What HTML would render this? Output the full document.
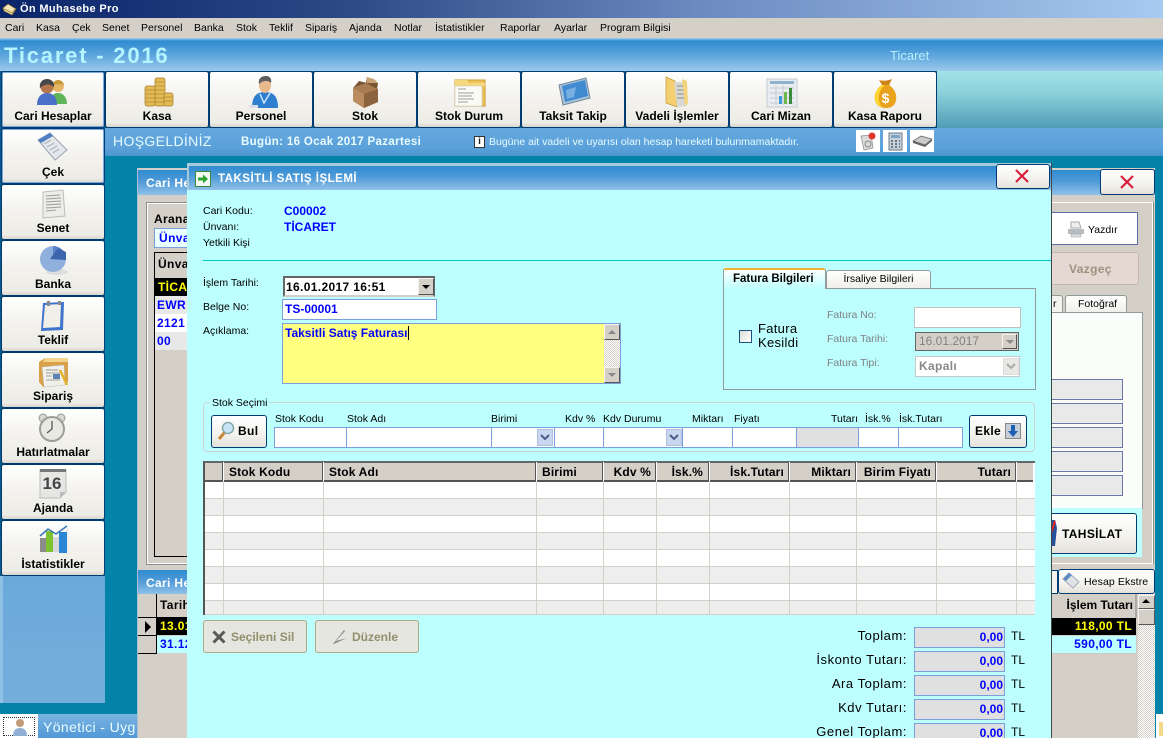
<!DOCTYPE html>
<html lang="tr"><head><meta charset="utf-8"><title>Ön Muhasebe Pro</title>
<style>
html,body{margin:0;padding:0;width:1163px;height:738px;overflow:hidden}
body{background:#0483a9;font:10.5px/14px "Liberation Sans","DejaVu Sans",sans-serif;color:#000}
div,span,svg{position:absolute;box-sizing:border-box}
#root{left:0;top:0;width:1163px;height:738px;overflow:hidden;background:#0483a9}
.t{white-space:nowrap}
.bd{font-weight:bold;letter-spacing:.35px}
.z{letter-spacing:0}
.r{text-align:right}
.m{top:21px;font-size:10.5px}
.tb{background:linear-gradient(#fff,#f5f4f0 40%,#ecebe5 92%,#d9d5c9);border:1px solid #003c74;border-radius:3px;width:104px;height:57px}
.tb b{position:absolute;left:0;right:0;text-align:center;top:37px;font-size:12px;line-height:14px;letter-spacing:0;white-space:nowrap}
.tb svg{left:34px;top:4px}
.ttl{background:linear-gradient(#2f8bd0,#4f9ad8 45%,#8fc1e8)}
.lb{font-size:10.5px;white-space:nowrap}
.in{background:#fff;border:1px solid #7b9fdb}
.btn{background:linear-gradient(#fff,#f3f2ee 60%,#e4e1d8);border:1px solid #003c74;border-radius:3px}
.dis{background:#e6e6e0;border:1px solid #aca987;border-radius:3px;color:#8f8f6c;font-weight:bold;font-size:12px}
.cv{width:1px;top:482px;height:133px;background:#d4d0c8}
.hs{width:2px;top:462px;height:20px;background:#555;border-right:1px solid #fff}
.hd{top:465px;font-size:12px;font-weight:bold;letter-spacing:.15px;white-space:nowrap}
.tot{left:914px;width:91px;height:21px;background:#e0e0e0;border:1px solid #7b9fdb;color:#00f;font-weight:bold;font-size:12px;text-align:right;padding-right:1px;line-height:19px}
.tl{left:760px;width:147px;text-align:right;font-size:13px;letter-spacing:.55px;white-space:nowrap}
.tu{left:1011px;font-size:12px}
.chk{background:repeating-conic-gradient(#fff 0 25%,#d4d0c8 0 50%) 0 0/2px 2px}
.sb{background:#d4d0c8;border:1px solid;border-color:#f4f3ee #555 #555 #f4f3ee}
.fld{left:1051px;width:72px;height:21px;background:#e9e9e9;border:1px solid #6a7aa8;border-left:0}
</style></head><body>
<div id="root">

<!-- title bar -->
<div style="left:0;top:0;width:1163px;height:18px;background:linear-gradient(90deg,#0a246a,#2c4a86 30%,#6b8ac0 60%,#a6caf0)"></div>
<svg style="left:2px;top:3px" width="15" height="13" viewBox="0 0 15 13"><path d="M1 5L6 1l8 5-4 6-8-4z" fill="#f1e3b5" stroke="#8a6a2a" stroke-width=".6"/><path d="M2 6l8 4 3-4" fill="none" stroke="#b08d45"/></svg>
<div class="t bd" style="left:20px;top:2px;color:#fff;font-size:11px">Ön Muhasebe Pro</div>

<!-- menu -->
<div style="left:0;top:18px;width:1163px;height:20px;background:#d4d0c8"></div>
<span class="t m" style="left:5px">Cari</span><span class="t m" style="left:36px">Kasa</span><span class="t m" style="left:72px">Çek</span><span class="t m" style="left:102px">Senet</span><span class="t m" style="left:141px">Personel</span><span class="t m" style="left:194px">Banka</span><span class="t m" style="left:236px">Stok</span><span class="t m" style="left:269px">Teklif</span><span class="t m" style="left:305px">Sipariş</span><span class="t m" style="left:349px">Ajanda</span><span class="t m" style="left:394px">Notlar</span><span class="t m" style="left:435px">İstatistikler</span><span class="t m" style="left:500px">Raporlar</span><span class="t m" style="left:554px">Ayarlar</span><span class="t m" style="left:600px">Program Bilgisi</span>

<!-- app header -->
<div style="left:0;top:38px;width:1163px;height:33px;background:linear-gradient(#a6d0ee 0,#2f8bd0 3px,#5ba3dc 50%,#9ccaec)"></div>
<div class="t" style="left:4px;top:43px;font-size:22px;line-height:26px;font-weight:bold;color:#b5f5ff;letter-spacing:1.800px">Ticaret - 2016</div>
<div class="t" style="left:890px;top:49px;font-size:13px;color:#b5f0ff">Ticaret</div>

<!-- toolbar bg -->
<div style="left:937px;top:71px;width:226px;height:57px;background:linear-gradient(#a2e2e8,#8ad0da 40%,#4f9db5)"></div>
<div style="left:0;top:71px;width:937px;height:57px;background:#0b5a8c"></div>

<div class="tb" style="left:1px;top:71px;box-shadow:inset 0 0 0 1px #7fa8e0"><svg width="34" height="32" viewBox="0 0 34 32"><circle cx="22" cy="10" r="6" fill="#e8b765"/><path d="M22 4a6 6 0 0 1 6 5c-3-1-8-1-11 0a6 6 0 0 1 5-5z" fill="#c79a3a"/><path d="M14 28c0-7 3-11 8-11s9 4 9 11z" fill="#5fb45a"/><circle cx="11" cy="11" r="6.500" fill="#b5764a"/><path d="M4 12c-1-6 3-9 7-9s8 3 7 8c-3-3-9-4-14 1z" fill="#47474a"/><path d="M1 29c0-8 4-12 10-12s10 4 10 12z" fill="#4a70c8"/></svg><b>Cari Hesaplar</b></div>
<div class="tb" style="left:105px;top:71px"><svg width="34" height="32" viewBox="0 0 34 32"><g fill="#e2ba58" stroke="#a87f25" stroke-width=".7"><rect x="15" y="2" width="10" height="28" rx="2"/><rect x="5" y="10" width="10" height="20" rx="2"/><rect x="24" y="17" width="9" height="13" rx="2"/></g><path d="M15 6h10M15 10h10M15 14h10M15 18h10M15 22h10M15 26h10M5 14h10M5 18h10M5 22h10M5 26h10M24 21h9M24 25h9" stroke="#b08a2e" stroke-width=".8"/></svg><b>Kasa</b></div>
<div class="tb" style="left:209px;top:71px"><svg width="36" height="33" viewBox="0 0 36 33"><path d="M8 32c0-11 4-16 13-16s13 5 13 16z" fill="#2f7fd0"/><ellipse cx="21" cy="9" rx="6" ry="8" fill="#e8b98c"/><path d="M15 8c-1-6 3-8 7-8s6 3 5 7c-3-3-8-3-12 1z" fill="#5e5e62"/><path d="M16 18l4 9 6-10" fill="none" stroke="#d5ecff" stroke-width="1.400"/><rect x="5" y="29" width="9" height="3" fill="#dde"/></svg><b>Personel</b></div>
<div class="tb" style="left:313px;top:71px"><svg width="36" height="33" viewBox="0 0 36 33"><path d="M5 12l14-5 11 6v13l-14 6-11-7z" fill="#a97b50"/><path d="M16 18l14-5v13l-14 6z" fill="#8c6440"/><path d="M5 12l11 6v14l-11-7z" fill="#bb8c60"/><path d="M19 1l11 6-1 6-11-6zM5 12l6-7 8 2" fill="#7a5534"/><path d="M19 1l7 2 4 4-11 0z" fill="#c9a277"/></svg><b>Stok</b></div>
<div class="tb" style="left:417px;top:71px"><svg width="36" height="32" viewBox="0 0 36 32"><path d="M3 4h30v26H3z" fill="#eec45a" stroke="#c89b2e"/><path d="M3 4h12l2 3h16v3H3z" fill="#f6d97c"/><rect x="3" y="10" width="27" height="20" fill="#fbfbf6" stroke="#c9c9bb" stroke-width=".6"/><path d="M6 13h8M6 17h16M6 20h14M6 23h16M6 26h10" stroke="#9b9b9b"/></svg><b>Stok Durum</b></div>
<div class="tb" style="left:521px;top:71px"><svg width="36" height="32" viewBox="0 0 36 32"><path d="M3 9L30 2l4 20-27 7z" fill="#a9c4da" stroke="#74889a"/><path d="M6 10l23-6 3 16-23 6z" fill="#3f8ad0"/><path d="M10 14l10-3-2 10-7 2z" fill="#79b0e2"/></svg><b>Taksit Takip</b></div>
<div class="tb" style="left:625px;top:71px"><svg width="36" height="33" viewBox="0 0 36 33"><path d="M6 1l9 4 2 26-11-4z" fill="#f3cf72" stroke="#c69a30" stroke-width=".7"/><path d="M14 6h11l2 24-10 1z" fill="#d9d9d4"/><path d="M17 10h7M17 14h8M17 18h8M17 22h8" stroke="#8b8b8b"/><path d="M22 3l5 2 1 22-3 3z" fill="#f3d47d"/></svg><b>Vadeli İşlemler</b></div>
<div class="tb" style="left:729px;top:71px"><svg width="36" height="32" viewBox="0 0 36 32"><rect x="3" y="3" width="30" height="28" fill="#e9edf0" stroke="#c5ccd3"/><rect x="6" y="5" width="24" height="3" fill="#8fb0cf"/><path d="M6 12h24M6 17h24M6 22h24M6 27h24M12 9v20M19 9v20" stroke="#c4ccd4"/><rect x="15" y="20" width="3" height="8" fill="#3d9ad6"/><rect x="20" y="16" width="3" height="12" fill="#6dba4a"/><rect x="25" y="12" width="3" height="16" fill="#3e8a3c"/></svg><b>Cari Mizan</b></div>
<div class="tb" style="left:833px;top:71px"><svg width="36" height="34" viewBox="0 0 36 34"><path d="M11 4c3 1 8 1 13-1l-3 6h-7z" fill="#cf8418"/><path d="M14 9h7c6 4 8 10 7 15-1 6-5 8-10 8s-10-2-11-8c-1-5 1-11 7-15z" fill="#eaa21d"/><path d="M14 9h3C10 14 9 25 14 31c-4-1-6-3-7-7-1-5 1-11 7-15z" fill="#ffd42e"/><text x="17.500" y="27" font-size="14" font-weight="bold" fill="#fff" text-anchor="middle" font-family="Liberation Sans">$</text></svg><b>Kasa Raporu</b></div>

<!-- welcome band -->
<div style="left:105px;top:128px;width:1058px;height:28px;background:linear-gradient(#66a8de,#5ba1da 70%,#4b95d0)"></div>
<div class="t" style="left:113px;top:134px;color:#e8fbff;font-size:14px;letter-spacing:.35px">HOŞGELDİNİZ</div>
<div class="t bd" style="left:241px;top:135px;color:#eafcff;font-size:11.500px">Bugün: 16 Ocak 2017 Pazartesi</div>
<div style="left:474px;top:136px;width:11px;height:12px;background:#fff;border:1px solid #333;color:#222;font:bold 10px/10px 'Liberation Sans';text-align:center">i</div>
<div class="t" style="left:489px;top:135px;color:#e8fbff;font-size:10.500px">Bugüne ait vadeli ve uyarısı olan hesap hareketi bulunmamaktadır.</div>
<div style="left:856px;top:130px;width:24px;height:22px;background:#fff"></div>
<div style="left:883px;top:130px;width:24px;height:22px;background:#fff"></div>
<div style="left:910px;top:130px;width:24px;height:22px;background:#fff"></div>
<svg style="left:858px;top:131px" width="20" height="20" viewBox="0 0 20 20"><path d="M3 5l10-1 2 13-9 2z" fill="#dcdcdc" stroke="#888" stroke-width=".7"/><circle cx="14" cy="5" r="3.500" fill="#e2362c"/><circle cx="10" cy="13" r="3" fill="none" stroke="#888"/></svg>
<svg style="left:887px;top:132px" width="17" height="19" viewBox="0 0 17 19"><rect x="2" y="1" width="13" height="17" fill="#c8d2da" stroke="#69788a"/><rect x="4" y="3" width="9" height="3" fill="#7da4c4"/><path d="M4 9h2M8 9h2M12 9h1M4 12h2M8 12h2M12 12h1M4 15h2M8 15h2M12 15h1" stroke="#4a5866" stroke-width="1.500"/></svg>
<svg style="left:912px;top:134px" width="21" height="14" viewBox="0 0 21 14"><path d="M1 7l8-5 11 3-7 6z" fill="#c9c9c9" stroke="#555" stroke-width=".7"/><path d="M1 7l12 4v2L1 9zM13 11l7-6v2l-7 6z" fill="#666"/></svg>

<!-- sidebar -->
<div style="left:0;top:128px;width:105px;height:575px;background:linear-gradient(#4f97d4,#73aedd);border-left:3px solid #8fc0e6"></div>
<div style="left:0;top:128px;width:105px;height:448px;background:#0b5a8c"></div>
<div class="tb" style="left:1px;top:128px;height:56px;box-shadow:inset 0 0 0 1px #7fa8e0"><svg style="left:33px;top:2px" width="34" height="32" viewBox="0 0 34 32"><path d="M3 9L15 2l17 17-12 10z" fill="#e3e6ea" stroke="#9aa4ae"/><path d="M3 9L15 2l3 3L6 12z" fill="#4d7fc4"/><path d="M9 13l7-4M12 16l7-4M15 19l7-4M18 22l6-4" stroke="#9fa9b3"/></svg><b style="top:36px">Çek</b></div>
<div class="tb" style="left:1px;top:184px;height:56px"><svg style="left:36px;top:3px" width="30" height="32" viewBox="0 0 30 32"><path d="M5 4l20-2 2 26-22 2z" fill="#ececea" stroke="#bcbcb8"/><path d="M8 8l14-1M8 11l15-1M8 14l15-1M8 17l15-1M8 20l15-1M8 23l10-1" stroke="#9c9c98"/></svg><b style="top:36px">Senet</b></div>
<div class="tb" style="left:1px;top:240px;height:56px"><svg style="left:34px;top:3px" width="34" height="32" viewBox="0 0 34 32"><ellipse cx="21" cy="28" rx="11" ry="3" fill="#ddd"/><circle cx="17" cy="15" r="13" fill="#8fb0dc"/><path d="M17 15V2a13 13 0 0 1 13 13z" fill="#5b84c4"/><path d="M14 15L22 4l8 4v8z" fill="#3c65ac"/></svg><b style="top:36px">Banka</b></div>
<div class="tb" style="left:1px;top:296px;height:56px"><svg style="left:35px;top:4px" width="30" height="31" viewBox="0 0 30 31"><path d="M6 2l21-1-1 28-22 1z" fill="#3f74cc"/><path d="M8 4l16-1-1 23-17 1z" fill="#f0efe9"/><rect x="10" y="0" width="3" height="5" fill="#888"/><rect x="21" y="0" width="3" height="4" fill="#888"/></svg><b style="top:36px">Teklif</b></div>
<div class="tb" style="left:1px;top:352px;height:56px"><svg style="left:35px;top:3px" width="34" height="33" viewBox="0 0 34 33"><path d="M2 6l6-4h23v24l-25 5-4-5z" fill="#d9a24a"/><path d="M8 2h23v4H6z" fill="#f4d58c"/><path d="M5 11l22-2 1 20-21 2z" fill="#f1f1ec" stroke="#bbb" stroke-width=".5"/><path d="M9 14h12M9 17h14M9 20h6M9 24h14" stroke="#9a9a9a"/><rect x="16" y="18" width="7" height="5" fill="#5b84b4"/><path d="M23 14l7 15" stroke="#e3b228" stroke-width="2.500"/></svg><b style="top:36px">Sipariş</b></div>
<div class="tb" style="left:1px;top:408px;height:56px"><svg style="left:35px;top:3px" width="30" height="32" viewBox="0 0 30 32"><circle cx="6" cy="6" r="4" fill="#d7d7d2" stroke="#999"/><circle cx="24" cy="6" r="4" fill="#d7d7d2" stroke="#999"/><circle cx="15" cy="17" r="12" fill="#e9e9e4" stroke="#9d9d98" stroke-width="2"/><path d="M15 9v8l-5 4" stroke="#555" stroke-width="1.300" fill="none"/></svg><b style="top:36px">Hatırlatmalar</b></div>
<div class="tb" style="left:1px;top:464px;height:56px"><svg style="left:36px;top:3px" width="30" height="32" viewBox="0 0 30 32"><path d="M2 2h26v22l-6 6H2z" fill="#e6e6e4" stroke="#bcbcba"/><path d="M2 1h26v3H2z" fill="#777"/><text x="14" y="21" font-size="17" font-weight="bold" fill="#444" text-anchor="middle" font-family="Liberation Sans">16</text><path d="M22 30l6-6h-6z" fill="#bbb"/></svg><b style="top:36px">Ajanda</b></div>
<div class="tb" style="left:1px;top:520px;height:56px"><svg style="left:35px;top:3px" width="34" height="32" viewBox="0 0 34 32"><path d="M2 28L32 3v27H6z" fill="#eee"/><rect x="3" y="14" width="6" height="14" fill="#8c8c8c"/><rect x="9" y="7" width="7" height="21" fill="#7cc230"/><rect x="16" y="13" width="6" height="15" fill="#d7d7d7"/><rect x="22" y="8" width="8" height="21" fill="#2a86d4"/><path d="M3 12l8-7 8 5 11-8" fill="none" stroke="#3475b8" stroke-width="1.500"/></svg><b style="top:36px">İstatistikler</b></div>

<!-- footer -->
<div style="left:0;top:714px;width:38px;height:24px;background:#fff"></div>
<div style="left:3px;top:717px;width:32px;height:19px;border:1px dotted #333"></div>
<svg style="left:12px;top:717px" width="16" height="19" viewBox="0 0 16 19"><circle cx="8" cy="6" r="4" fill="#c29a7a"/><path d="M1 19c0-6 3-8 7-8s7 2 7 8z" fill="#8fb0d4"/></svg>
<div style="left:38px;top:714px;width:100px;height:24px;background:linear-gradient(#7ab4e2,#5198d6)"></div>
<div class="t" style="left:43px;top:718px;font-size:14px;line-height:18px;color:#eafcff;letter-spacing:.4px">Yönetici - Uyg</div>
<div style="left:1156px;top:714px;width:7px;height:24px;background:#fff"></div>
<div style="left:1159px;top:722px;width:4px;height:14px;background:#f4d98a"></div>

<!-- background window -->
<div style="left:137px;top:168px;width:1018px;height:570px;background:#d4d0c8;border-left:1px solid #a7c0cf"></div>
<div class="ttl" style="left:138px;top:170px;width:1017px;height:25px"></div>
<div class="t bd" style="left:146px;top:176px;color:#fff;font-size:12px">Cari He</div>
<div style="left:147px;top:203px;width:60px;height:361px;border:1px solid #fff;outline:1px solid #8c8c88"></div>
<div class="t bd" style="left:154px;top:212px;font-size:12px">Arana</div>
<div style="left:154px;top:228px;width:40px;height:20px;background:#eaffff;border:1px solid #7b9fdb;color:#00f;font-weight:bold;font-size:12px;line-height:18px;padding-left:4px;letter-spacing:.4px">Ünva</div>
<div style="left:154px;top:252px;width:40px;height:305px;border:1px solid #000;border-right:0;background:#d4d0c8"></div>
<div class="t bd" style="left:158px;top:257px;font-size:12px">Ünva</div>
<div class="t bd" style="left:155px;top:278px;width:32px;height:18px;background:#000;color:#ff0;font-size:12px;line-height:18px;padding-left:3px">TİCA</div>
<div class="t bd" style="left:155px;top:296px;width:32px;height:18px;background:#e8e8e8;color:#00f;font-size:12px;line-height:18px;padding-left:2px">EWR</div>
<div class="t bd" style="left:155px;top:314px;width:32px;height:18px;background:#fff;color:#00f;font-size:12px;line-height:18px;padding-left:2px">2121</div>
<div class="t bd" style="left:155px;top:332px;width:32px;height:18px;background:#e8e8e8;color:#00f;font-size:12px;line-height:18px;padding-left:2px">00</div>
<div class="ttl" style="left:138px;top:570px;width:50px;height:24px"></div>
<div class="t bd" style="left:146px;top:576px;color:#fff;font-size:12px">Cari He</div>
<div style="left:138px;top:594px;width:50px;height:24px;background:#d4d0c8;border-bottom:1px solid #000"></div>
<div style="left:156px;top:594px;width:1px;height:60px;background:#000"></div>
<div class="t bd" style="left:160px;top:598px;font-size:12px">Tarih</div>
<div style="left:145px;top:621px;width:0;height:0;border-left:6px solid #000;border-top:6px solid transparent;border-bottom:6px solid transparent"></div>
<div style="left:138px;top:635px;width:18px;height:1px;background:#000"></div>
<div style="left:138px;top:653px;width:19px;height:1px;background:#000"></div>
<div class="t bd" style="left:157px;top:618px;width:31px;height:17px;background:#000;color:#ff0;font-size:12px;line-height:17px;padding-left:3px;overflow:hidden">13.01</div>
<div class="t bd" style="left:157px;top:636px;width:31px;height:17px;background:#bdffff;color:#00f;font-size:12px;line-height:17px;padding-left:3px;overflow:hidden">31.12</div>

<!-- background window right side -->
<div style="left:1051px;top:202px;width:102px;height:362px;border:1px solid #fff;border-left:0;box-shadow:1px 0 0 #8c8c88"></div>
<div class="btn" style="left:1100px;top:169px;width:55px;height:26px;border-color:#003c74"></div>
<svg style="left:1119px;top:174px" width="16" height="16" viewBox="0 0 16 16"><path d="M2 2l12 12M14 2L2 14" stroke="#d8203c" stroke-width="2.200"/></svg>
<div style="left:1040px;top:212px;width:98px;height:33px;background:#fff;border:1px solid #5a6fa5"></div>
<svg style="left:1067px;top:221px" width="18" height="17" viewBox="0 0 18 17"><path d="M4 1h8l2 6H4z" fill="#eee" stroke="#aaa"/><path d="M1 8h16v5H1z" fill="#b5bcc2"/><path d="M4 13h10v3H4z" fill="#ddd" stroke="#999" stroke-width=".5"/></svg>
<div class="t" style="left:1088px;top:223px;font-size:10.500px">Yazdır</div>
<div style="left:1040px;top:252px;width:99px;height:33px;background:#e5d8d3;border:1px solid #c4b8a8;border-radius:3px"></div>
<div class="t bd" style="left:1069px;top:262px;color:#a0907e;font-size:12px">Vazgeç</div>
<div style="left:1051px;top:295px;width:12px;height:18px;background:#f4f3ee;border:1px solid #919b9c;border-left:0;border-bottom:0;border-radius:0 3px 0 0"></div>
<div class="t" style="left:1053px;top:297px;font-size:10.500px">r</div>
<div style="left:1065px;top:295px;width:62px;height:18px;background:linear-gradient(#fff,#f0efe9);border:1px solid #919b9c;border-bottom:0;border-radius:3px 3px 0 0"></div>
<div class="t" style="left:1078px;top:297px;font-size:10.500px">Fotoğraf</div>
<div style="left:1051px;top:312px;width:92px;height:197px;background:#fbfdfb;border:1px solid #919b9c;border-left:0"></div>
<div class="fld" style="top:379px"></div><div class="fld" style="top:403px"></div><div class="fld" style="top:427px"></div><div class="fld" style="top:451px"></div><div class="fld" style="top:475px"></div>
<div style="left:1051px;top:508px;width:91px;height:49px;background:#bdffff"></div>
<div class="btn" style="left:1040px;top:513px;width:97px;height:41px"></div>
<svg style="left:1044px;top:518px" width="14" height="30" viewBox="0 0 14 30"><path d="M1 2h10l2 8-2 18H3z" fill="#2a4f9a"/><path d="M4 2l4 10 3-9" stroke="#d22" stroke-width="2" fill="none"/></svg>
<div class="t bd" style="left:1062px;top:527px;font-size:12px">TAHSİLAT</div>
<div style="left:1051px;top:570px;width:7px;height:24px;background:#f4f3ee;border:1px solid #003c74;border-left:0"></div>
<div class="btn" style="left:1058px;top:569px;width:97px;height:25px"></div>
<svg style="left:1062px;top:572px" width="18" height="18" viewBox="0 0 18 18"><path d="M1 7l6-6 10 9-6 6z" fill="#dfe3e6" stroke="#aab"/><path d="M1 7l6-6 3 2-6 6z" fill="#5a8bc4"/></svg>
<div class="t" style="left:1084px;top:575px;font-size:10.500px;letter-spacing:.1px">Hesap Ekstre</div>
<div style="left:1051px;top:594px;width:85px;height:24px;background:#d4d0c8"></div>
<div style="left:1135px;top:594px;width:2px;height:24px;background:#aaa"></div>
<div class="t bd z r" style="left:1051px;top:598px;width:82px;font-size:12px">İşlem Tutarı</div>
<div class="bd r" style="left:1051px;top:618px;width:85px;height:17px;background:#000;color:#ff0;font-size:12px;line-height:17px;padding-right:4px">118,00 TL</div>
<div class="bd r" style="left:1051px;top:636px;width:85px;height:17px;background:#bdffff;color:#00f;font-size:12px;line-height:17px;padding-right:4px;box-shadow:0 1px 0 #c8c8c0">590,00 TL</div>
<div class="chk" style="left:1138px;top:594px;width:17px;height:144px"></div>
<div class="sb" style="left:1138px;top:595px;width:17px;height:14px"></div>
<div style="left:1142px;top:599px;width:0;height:0;border-bottom:4px solid #000;border-left:4px solid transparent;border-right:4px solid transparent"></div>
<div class="sb" style="left:1138px;top:609px;width:17px;height:16px"></div>

<!-- main dialog -->
<div style="left:187px;top:163px;width:865px;height:575px;background:#bdffff;border-right:1px solid #444"></div>
<div class="ttl" style="left:187px;top:163px;width:864px;height:27px;border-top:3px solid #a6cadc;border-left:2px solid #a6cadc"></div>
<svg style="left:195px;top:171px" width="16" height="16" viewBox="0 0 16 16"><rect x=".5" y=".5" width="15" height="15" fill="#f4f8f2" stroke="#3a8a3a"/><path d="M3 6.500h5V3.500L13 8l-5 4.500v-3H3z" fill="#2fa52f"/></svg>
<div class="t bd" style="left:218px;top:172px;color:#fff;font-size:11.500px;letter-spacing:.5px">TAKSİTLİ SATIŞ İŞLEMİ</div>
<div class="btn" style="left:996px;top:164px;width:54px;height:25px"></div>
<svg style="left:1014px;top:168px" width="16" height="16" viewBox="0 0 16 16"><path d="M2 2l12 12M14 2L2 14" stroke="#d8203c" stroke-width="2.200"/></svg>

<span class="lb" style="left:203px;top:204px">Cari Kodu:</span>
<span class="lb" style="left:203px;top:220px">Ünvanı:</span>
<span class="lb" style="left:203px;top:236px">Yetkili Kişi</span>
<span class="t bd z" style="left:284px;top:204px;color:#00f;font-size:12px">C00002</span>
<span class="t bd z" style="left:284px;top:220px;color:#00f;font-size:12px">TİCARET</span>
<div style="left:203px;top:260px;width:848px;height:1px;background:#00c8c8"></div>

<span class="lb" style="left:203px;top:276px">İşlem Tarihi:</span>
<span class="lb" style="left:203px;top:300px">Belge No:</span>
<span class="lb" style="left:203px;top:324px">Açıklama:</span>
<div class="bd" style="left:283px;top:276px;width:152px;height:21px;background:#fff;border:2px solid;border-color:#666 #666 #d4d0c8 #666;font-size:12px;line-height:18px;padding-left:1px">16.01.2017 16:51</div>
<div class="sb" style="left:418px;top:278px;width:16px;height:17px"></div>
<div style="left:422px;top:285px;width:0;height:0;border-top:4px solid #000;border-left:4px solid transparent;border-right:4px solid transparent"></div>
<div class="in bd z" style="left:282px;top:299px;width:155px;height:21px;color:#00f;font-size:12px;line-height:18px;padding-left:2px">TS-00001</div>
<div class="bd z" style="left:282px;top:323px;width:339px;height:61px;background:#ffff80;border:1px solid #7b9fdb;color:#00f;font-size:12px;line-height:16px;padding:1px 2px">Taksitli Satış Faturası<span style="position:static;border-left:1px solid #000"></span></div>
<div class="chk" style="left:604px;top:324px;width:16px;height:59px"></div>
<div class="sb" style="left:604px;top:324px;width:16px;height:16px"></div>
<div style="left:608px;top:330px;width:0;height:0;border-bottom:4px solid #888;border-left:4px solid transparent;border-right:4px solid transparent"></div>
<div class="sb" style="left:604px;top:367px;width:16px;height:16px"></div>
<div style="left:608px;top:373px;width:0;height:0;border-top:4px solid #888;border-left:4px solid transparent;border-right:4px solid transparent"></div>

<!-- tabs -->
<div style="left:723px;top:288px;width:313px;height:102px;border:1px solid #919b9c"></div>
<div style="left:826px;top:270px;width:105px;height:19px;background:linear-gradient(#fff,#f0efe9);border:1px solid #919b9c;border-radius:3px 3px 0 0"></div>
<div class="t" style="left:826px;top:272px;width:105px;text-align:center;font-size:10.500px">İrsaliye Bilgileri</div>
<div style="left:723px;top:268px;width:103px;height:21px;background:linear-gradient(#fff,#bdffff);border:1px solid #919b9c;border-top:2px solid #f0b030;border-bottom:0;border-radius:3px 3px 0 0"></div>
<div class="t bd z" style="left:733px;top:272px;font-size:11.500px">Fatura Bilgileri</div>
<div style="left:739px;top:330px;width:13px;height:13px;background:linear-gradient(135deg,#dcdcd6,#fff);border:1px solid #1c5180"></div>
<div class="t" style="left:758px;top:322px;font-size:13px;line-height:14px;letter-spacing:.3px">Fatura<br>Kesildi</div>
<span class="lb" style="left:827px;top:308px;color:#808080">Fatura No:</span>
<span class="lb" style="left:827px;top:332px;color:#808080">Fatura Tarihi:</span>
<span class="lb" style="left:827px;top:356px;color:#808080">Fatura Tipi:</span>
<div style="left:914px;top:307px;width:107px;height:21px;background:#fff;border:1px solid #c0c0c0"></div>
<div style="left:915px;top:332px;width:104px;height:19px;background:#d4d0c8;border:1px solid #666;color:#808080;font-size:12px;line-height:17px;padding-left:3px">16.01.2017</div>
<div class="sb" style="left:1002px;top:334px;width:15px;height:15px"></div>
<div style="left:1006px;top:340px;width:0;height:0;border-top:4px solid #888;border-left:4px solid transparent;border-right:4px solid transparent"></div>
<div class="bd" style="left:915px;top:356px;width:105px;height:21px;background:#fff;border:1px solid #c8c8c8;color:#888;font-size:12px;line-height:19px;padding-left:3px">Kapalı</div>
<div style="left:1003px;top:358px;width:16px;height:17px;background:#e8e8e4;border:1px solid #ddd"></div>
<svg style="left:1006px;top:363px" width="10" height="7" viewBox="0 0 10 7"><path d="M1 1l4 4 4-4" fill="none" stroke="#aaa" stroke-width="2"/></svg>

<!-- stock group -->
<div style="left:203px;top:402px;width:832px;height:50px;border:1px solid #ccd4d0;border-radius:4px"></div>
<div class="t" style="left:210px;top:396px;padding:0 2px;background:#bdffff;font-size:10.500px">Stok Seçimi</div>
<div class="btn" style="left:211px;top:415px;width:56px;height:33px"></div>
<svg style="left:217px;top:421px" width="18" height="20" viewBox="0 0 18 20"><path d="M2 18l6-7" stroke="#c8873a" stroke-width="3"/><circle cx="11" cy="7" r="5.500" fill="#c8e4f8" stroke="#8aa" stroke-width="1.500"/></svg>
<div class="t bd" style="left:238px;top:424px;font-size:12px">Bul</div>
<span class="lb" style="left:275px;top:412px">Stok Kodu</span><span class="lb" style="left:347px;top:412px">Stok Adı</span><span class="lb" style="left:491px;top:412px">Birimi</span><span class="lb" style="left:565px;top:412px">Kdv %</span><span class="lb" style="left:603px;top:412px">Kdv Durumu</span><span class="lb" style="left:692px;top:412px">Miktarı</span><span class="lb" style="left:734px;top:412px">Fiyatı</span><span class="lb" style="left:831px;top:412px">Tutarı</span><span class="lb" style="left:865px;top:412px">İsk.%</span><span class="lb" style="left:899px;top:412px">İsk.Tutarı</span>
<div class="in" style="left:274px;top:427px;width:73px;height:21px"></div>
<div class="in" style="left:346px;top:427px;width:146px;height:21px"></div>
<div class="in" style="left:491px;top:427px;width:64px;height:21px"></div>
<div class="in" style="left:554px;top:427px;width:50px;height:21px"></div>
<div class="in" style="left:603px;top:427px;width:80px;height:21px"></div>
<div class="in" style="left:682px;top:427px;width:51px;height:21px"></div>
<div class="in" style="left:732px;top:427px;width:65px;height:21px"></div>
<div class="in" style="left:796px;top:427px;width:63px;height:21px;background:#e0e0e0"></div>
<div class="in" style="left:858px;top:427px;width:41px;height:21px"></div>
<div class="in" style="left:898px;top:427px;width:65px;height:21px"></div>
<div style="left:537px;top:429px;width:16px;height:17px;background:#c8d6f0;border:1px solid #b0c0e0"></div>
<div style="left:666px;top:429px;width:16px;height:17px;background:#c8d6f0;border:1px solid #b0c0e0"></div>
<svg style="left:540px;top:434px" width="10" height="7" viewBox="0 0 10 7"><path d="M1 1l4 4 4-4" fill="none" stroke="#4a5f88" stroke-width="2"/></svg>
<svg style="left:669px;top:434px" width="10" height="7" viewBox="0 0 10 7"><path d="M1 1l4 4 4-4" fill="none" stroke="#4a5f88" stroke-width="2"/></svg>
<div class="btn" style="left:969px;top:415px;width:58px;height:33px"></div>
<div class="t bd" style="left:975px;top:424px;font-size:12px">Ekle</div>
<div style="left:1005px;top:423px;width:16px;height:16px;background:#c5cdd8;border:1px solid #888"></div>
<svg style="left:1006px;top:424px" width="14" height="14" viewBox="0 0 14 14"><path d="M5 1h4v6h3L7 13 2 7h3z" fill="#1d5fb0"/></svg>

<!-- grid -->
<div style="left:203px;top:461px;width:832px;height:154px;border-top:2px solid #666;border-left:2px solid #555;background:#fff"></div>
<div style="left:205px;top:463px;width:828px;height:19px;background:#d4d0c8;border-bottom:2px solid #555"></div>
<div style="left:205px;top:482px;width:830px;height:133px;background:repeating-linear-gradient(#fff 0 16px,#d4d0c8 16px 17px,#eee 17px 33px,#d4d0c8 33px 34px);border-bottom:1px solid #d4d0c8"></div>
<div class="cv" style="left:223px"></div><div class="cv" style="left:323px"></div><div class="cv" style="left:536px"></div><div class="cv" style="left:603px"></div><div class="cv" style="left:656px"></div><div class="cv" style="left:709px"></div><div class="cv" style="left:789px"></div><div class="cv" style="left:856px"></div><div class="cv" style="left:936px"></div><div class="cv" style="left:1016px"></div>
<div class="hs" style="left:222px"></div><div class="hs" style="left:322px"></div><div class="hs" style="left:535px"></div><div class="hs" style="left:602px"></div><div class="hs" style="left:655px"></div><div class="hs" style="left:708px"></div><div class="hs" style="left:788px"></div><div class="hs" style="left:855px"></div><div class="hs" style="left:935px"></div><div class="hs" style="left:1015px"></div>
<span class="hd" style="left:229px">Stok Kodu</span><span class="hd" style="left:329px">Stok Adı</span><span class="hd" style="left:542px">Birimi</span>
<span class="hd r" style="left:603px;width:48px">Kdv %</span><span class="hd r" style="left:656px;width:47px">İsk.%</span><span class="hd r" style="left:709px;width:75px">İsk.Tutarı</span><span class="hd r" style="left:789px;width:62px">Miktarı</span><span class="hd r" style="left:856px;width:75px">Birim Fiyatı</span><span class="hd r" style="left:936px;width:75px">Tutarı</span>

<!-- action buttons -->
<div class="dis" style="left:203px;top:620px;width:104px;height:33px"></div>
<svg style="left:212px;top:630px" width="14" height="14" viewBox="0 0 14 14"><path d="M1.500 1.500l11 11M12.500 1.500l-11 11" stroke="#5a5a5a" stroke-width="3"/></svg>
<div class="t" style="left:231px;top:630px;color:#8f8f6c;font-weight:bold;font-size:12px">Seçileni Sil</div>
<div class="dis" style="left:315px;top:620px;width:104px;height:33px"></div>
<svg style="left:332px;top:629px" width="16" height="16" viewBox="0 0 16 16"><path d="M1 15L12 1l1 1L4 12l11-3-13 6z" fill="#8c8c8c"/></svg>
<div class="t" style="left:352px;top:630px;color:#8f8f6c;font-weight:bold;font-size:12px">Düzenle</div>

<!-- totals -->
<span class="tl" style="top:629px">Toplam:</span><span class="tl" style="top:653px">İskonto Tutarı:</span><span class="tl" style="top:677px">Ara Toplam:</span><span class="tl" style="top:701px">Kdv Tutarı:</span><span class="tl" style="top:725px">Genel Toplam:</span>
<div class="tot" style="top:627px">0,00</div><div class="tot" style="top:651px">0,00</div><div class="tot" style="top:675px">0,00</div><div class="tot" style="top:699px">0,00</div><div class="tot" style="top:723px">0,00</div>
<span class="tu" style="top:629px">TL</span><span class="tu" style="top:653px">TL</span><span class="tu" style="top:677px">TL</span><span class="tu" style="top:701px">TL</span><span class="tu" style="top:725px">TL</span>

</div>
</body></html>
